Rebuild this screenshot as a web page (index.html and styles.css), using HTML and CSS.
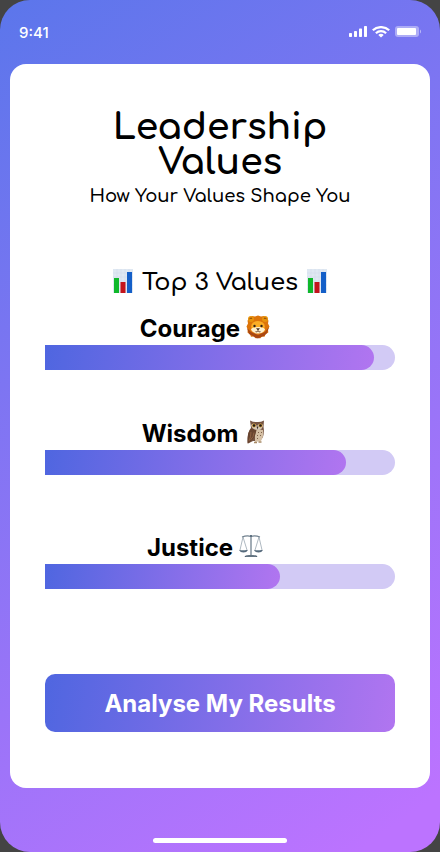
FILE: index.html
```html
<!DOCTYPE html>
<html lang="en">
<head>
    <meta charset="UTF-8">
    <meta name="viewport" content="width=device-width, initial-scale=1.0">
    <title>Leadership Values</title>
    <link rel="stylesheet" href="styles.css">
</head>
<body>
    <!-- bar chart icon, used on both sides of the section title -->
    <svg class="hide" aria-hidden="true">
        <symbol id="chart" viewBox="0 0 20 24">
            <rect width="20" height="24" fill="#dfe8f2"/>
            <path d="M0 4h20M0 8h20M0 12h20M0 16h20M0 20h20M4 0v24M8 0v24M12 0v24M16 0v24" stroke="#cddae8" stroke-width="0.5"/>
            <rect x="1" y="9" width="5" height="15" fill="#0fb82b"/>
            <rect x="7.500" y="13" width="5" height="11" fill="#c3141c"/>
            <rect x="14" y="3" width="5" height="21" fill="#145fc8"/>
        </symbol>
    </svg>

    <div class="phone">
        <header class="status">
            <span class="time">9:41</span>
            <div class="status-icons">
                <svg width="18" height="12" viewBox="0 0 18 12" fill="#fff">
                    <rect x="0" y="7" width="3" height="4" rx="0.7"/>
                    <rect x="5" y="5" width="3" height="6" rx="0.7"/>
                    <rect x="10" y="2.500" width="3" height="8.500" rx="0.7"/>
                    <rect x="15" y="0" width="3" height="11" rx="0.7"/>
                </svg>
                <svg width="18" height="12" viewBox="0 0 18 12" fill="none" stroke="#fff" stroke-width="2.200">
                    <path d="M0.800 4.300C5.300 0 12.700 0 17.200 4.300"/>
                    <path d="M3.900 7.200C6.700 4.500 11.300 4.500 14.100 7.200"/>
                    <path d="M9 11.500L6.300 8.900C7.800 7.500 10.200 7.500 11.700 8.900Z" fill="#fff" stroke="none"/>
                </svg>
                <svg width="26" height="12" viewBox="0 0 26 12" fill="#fff">
                    <rect width="24" height="11" rx="3" opacity="0.4"/>
                    <rect x="2" y="2" width="19" height="7" rx="1"/>
                    <path d="M25 3.500v4q1-.5 1-2t-1-2z" opacity="0.5"/>
                </svg>
            </div>
        </header>

        <main class="card">
            <h1>Leadership<br>Values</h1>
            <p class="subtitle">How Your Values Shape You</p>

            <h2>
                <svg class="chart"><use href="#chart"/></svg>
                Top 3 Values
                <svg class="chart"><use href="#chart"/></svg>
            </h2>

            <div class="values">
                <section class="value">
                    <h3 id="courage">Courage
                        <svg class="icon" viewBox="0 0 24 24">
                            <path d="M12 0.500l3 1 3-.5 1.500 2.500 3 2-.5 3 1.500 3-1.500 3 .3 3-2.800 1.800-1 2.500-2.500-.2-2 2-2-1-2 1-2-2-3 .2-1-2.500L1.500 17.500l.3-3L.500 11.500l1.500-3-.5-3 3-2L6 1l3 .5z" fill="#dd7409"/>
                            <path d="M1 13l2 6 4 2 2 1.500L12 23.500l3-1.500 3-1 3-3 2-6-4 5-7 3-7-3z" fill="#a94712"/>
                            <circle cx="5" cy="4" r="3" fill="#e8930b"/>
                            <circle cx="19" cy="4" r="3" fill="#e8930b"/>
                            <path d="M3.500 4.200q1-2 2.600-.8M20.500 4.200q-1-2-2.600-.8" stroke="#80400b" fill="none"/>
                            <ellipse cx="12" cy="11.500" rx="6.800" ry="5.500" fill="#fbad25"/>
                            <path d="M12 12C9 12 5 13 5 14.500c1 3 4.500 4 7 4s6-1 7-4c0-1.500-4-2.500-7-2.500z" fill="#fff0cb"/>
                            <circle cx="8.500" cy="11" r="1.200" fill="#302017"/>
                            <circle cx="15.500" cy="11" r="1.200" fill="#302017"/>
                            <path d="M10 13.300h4l-2 2.400z" fill="#45302a"/>
                            <path d="M9.500 16.700q1.500.7 2.500-1 1 1.700 2.500 1" stroke="#654436" fill="none"/>
                        </svg>
                    </h3>
                    <div class="track" role="progressbar" aria-labelledby="courage" aria-valuenow="94">
                        <div class="fill" style="width: 94%"></div>
                    </div>
                </section>

                <section class="value">
                    <h3 id="wisdom">Wisdom
                        <svg class="icon" viewBox="0 0 24 24">
                            <path d="M6 .5q4 2 8 1.500 3 0 6-1.500L19.500 7q1 5-.5 10l-3 4H9l-5 2.500Q2.500 13 7 8z" fill="#765442"/>
                            <path d="M11 10q5-1 8 0 1 6-2 11l-6 1z" fill="#d5c0a5"/>
                            <path d="M7 8.500Q3 13 3.500 23.500 11 20 12.500 10z" fill="#68442f"/>
                            <path d="M7 12q0 5-2 9M10 12.500q0 4-3.500 7.500" stroke="#8e6142" fill="none"/>
                            <path d="M7 5q3-3 6 1 3-4 6-1-.5 5-5 5-6 0-7-5z" fill="#d6c7b4"/>
                            <circle cx="10" cy="5.500" r="1.900" fill="#d29b35"/>
                            <circle cx="16.500" cy="5.500" r="1.900" fill="#d29b35"/>
                            <circle cx="10" cy="5.500" r="1.300" fill="#1e1815"/>
                            <circle cx="16.500" cy="5.500" r="1.300" fill="#1e1815"/>
                            <path d="M12.500 6.500h2l-1 3z" fill="#39302a"/>
                            <path d="M14 12l1 1M17 12l1 1M13 15l1 1M16 15l1 1M13 18l1 1" stroke="#80624a"/>
                            <path d="M10 22.500h3M14.500 22h3" stroke="#a78b67" stroke-width="1.500"/>
                        </svg>
                    </h3>
                    <div class="track" role="progressbar" aria-labelledby="wisdom" aria-valuenow="86">
                        <div class="fill" style="width: 86%"></div>
                    </div>
                </section>

                <section class="value">
                    <h3 id="justice">Justice
                        <svg class="icon" viewBox="0 0 24 24">
                            <path d="M12 1v20M3 3q5-1.800 9-.5Q16 1.200 21 3" stroke="#71818f" stroke-width="1.300" fill="none"/>
                            <path d="M4 3L1 16M4 3l4 13M20 3l-4 13M20 3l3 13" stroke="#8d9ba6" stroke-width="0.700" fill="none"/>
                            <path d="M0 16h9q-1.300 2.500-4.500 2.500T0 16zM15 16h9q-1.300 2.500-4.500 2.500T15 16z" fill="#566a7c"/>
                            <path d="M5.500 23q.5-2 4.500-2h4q4 0 4.500 2z" fill="#4b5d6d"/>
                            <path d="M7 22h10M1.500 16.500h5M16.500 16.500h5" stroke="#9facb6" stroke-width="0.600"/>
                            <circle cx="12" cy="2" r="1" fill="#536777"/>
                        </svg>
                    </h3>
                    <div class="track" role="progressbar" aria-labelledby="justice" aria-valuenow="67">
                        <div class="fill" style="width: 67%"></div>
                    </div>
                </section>
            </div>

            <button class="analyse">Analyse My Results</button>
        </main>

        <div class="home-bar"></div>
    </div>
</body>
</html>
```
FILE: styles.css
```css
* {
    margin: 0;
    padding: 0;
    box-sizing: border-box;
}
body {
    background-color: #444;
    font-family: Inter, "Liberation Sans", sans-serif;
    color: black;
}
.hide {
    display: none;
}
.phone {
    min-height: 100vh;
    padding: 0 10px 9px;
    display: flex;
    flex-direction: column;
    border-radius: 30px;
    background: linear-gradient(145deg, #5b76eb, #bc73ff 95%);
}
.status {
    height: 64px;
    padding: 0 9px;
    display: flex;
    justify-content: space-between;
    align-items: center;
    color: white;
}
.time {
    font-size: 15px;
    font-weight: 500;
}
.status-icons {
    display: flex;
    gap: 5px;
}
.card {
    padding: 46px 35px 56px;
    border-radius: 16px;
    background-color: white;
    text-align: center;
}
h1 {
    font-family: Comfortaa, Inter, sans-serif;
    font-size: 36px;
    font-weight: 700;
    line-height: 35px;
}
.subtitle {
    margin-top: 4px;
    font-family: Comfortaa, Inter, sans-serif;
    font-size: 18px;
    font-weight: 600;
    line-height: 24px;
}
h2 {
    margin-top: 57px;
    display: flex;
    justify-content: center;
    align-items: center;
    gap: 9px;
    font-family: Comfortaa, Inter, sans-serif;
    font-size: 24px;
    font-weight: 600;
    line-height: 36px;
}
.chart {
    width: 20px;
    height: 24px;
    margin-bottom: 4px;
}
.values {
    margin-top: 12px;
    display: flex;
    flex-direction: column;
    gap: 48px;
}
.value:last-child {
    margin-top: 9px;
}
h3 {
    padding-right: 30px;
    display: flex;
    justify-content: center;
    align-items: center;
    gap: 6px;
    font-size: 24px;
    font-weight: 700;
    line-height: 32px;
}
.icon {
    width: 24px;
    height: 24px;
    margin-bottom: 4px;
}
.track {
    height: 25px;
    border-radius: 0 13px 13px 0;
    background-color: #d2caf5;
    overflow: hidden;
}
.fill {
    height: 100%;
    border-radius: 0 13px 13px 0;
    background: linear-gradient(100deg, #4f66e0, #b175f0);
}
.analyse {
    width: 100%;
    height: 58px;
    margin-top: 85px;
    border: none;
    border-radius: 10px;
    background: linear-gradient(100deg, #4f66e0, #b175f0);
    color: white;
    font-family: inherit;
    font-size: 24px;
    font-weight: 700;
    cursor: pointer;
}
.home-bar {
    width: 134px;
    height: 5px;
    margin: auto auto 0;
    border-radius: 3px;
    background-color: white;
}
```
